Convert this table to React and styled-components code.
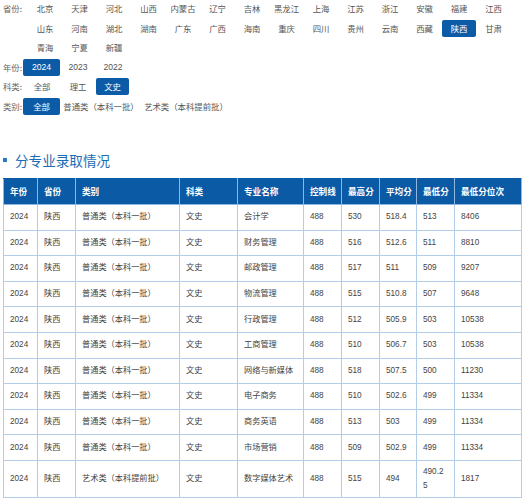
import React from "react";
import styled, { createGlobalStyle } from "styled-components";

const GlobalStyle = createGlobalStyle`
  body {
    margin: 0;
    background: #fff;
    font-family: "Liberation Sans", "Noto Sans CJK SC", sans-serif;
  }
`;

const provinces = [
  "北京", "天津", "河北", "山西", "内蒙古", "辽宁", "吉林", "黑龙江", "上海", "江苏", "浙江", "安徽", "福建", "江西",
  "山东", "河南", "湖北", "湖南", "广东", "广西", "海南", "重庆", "四川", "贵州", "云南", "西藏", "陕西", "甘肃",
  "青海", "宁夏", "新疆",
];

const years = [
  { text: "2024", w: 37, active: true },
  { text: "2023", w: 36 },
  { text: "2022", w: 34 },
];

const subjects = [
  { text: "全部", w: 38 },
  { text: "理工", w: 34 },
  { text: "文史", w: 33, active: true },
];

const kinds = [
  { text: "全部", w: 37, active: true },
  { text: "普通类（本科一批）", w: 82 },
  { text: "艺术类（本科提前批）", w: 88 },
];

const normal = ["普通类（本科一批）", "文史"];

const rows = [
  ["会计学", "488", "530", "518.4", "513", "8406"],
  ["财务管理", "488", "516", "512.6", "511", "8810"],
  ["邮政管理", "488", "517", "511", "509", "9207"],
  ["物流管理", "488", "515", "510.8", "507", "9648"],
  ["行政管理", "488", "512", "505.9", "503", "10538"],
  ["工商管理", "488", "510", "506.7", "503", "10538"],
  ["网络与新媒体", "488", "518", "507.5", "500", "11230"],
  ["电子商务", "488", "510", "502.6", "499", "11334"],
  ["商务英语", "488", "513", "503", "499", "11334"],
  ["市场营销", "488", "509", "502.9", "499", "11334"],
];

const headers = ["年份", "省份", "类别", "科类", "专业名称", "控制线", "最高分", "平均分", "最低分", "最低分位次"];
const colWidths = [34, 38, 104, 58, 66, 38, 38, 37, 38, 67];

const Filters = styled.div`
  display: flex;
  flex-direction: column;
  gap: 2.6px;
  font-family: "Noto Sans CJK SC", sans-serif;
  font-size: 8.4px;
  color: #555;
`;

const FilterRow = styled.div`
  display: flex;
  align-items: flex-start;
`;

const Label = styled.span`
  width: ${(p) => p.$w}px;
  flex-shrink: 0;
  height: 17px;
  line-height: 17px;
  padding-left: 3px;
  box-sizing: border-box;
  color: #666;
  white-space: nowrap;
`;

const ProvinceGrid = styled.div`
  display: grid;
  grid-template-columns: repeat(14, 34.5px);
  row-gap: 2.6px;
`;

const Item = styled.span`
  width: ${(p) => (p.$w ? `${p.$w}px` : "auto")};
  height: 17px;
  line-height: 17px;
  text-align: center;
  white-space: nowrap;
  border-radius: 2px;
  font-family: ${(p) => (p.$num ? '"Liberation Sans", sans-serif' : "inherit")};
  font-size: ${(p) => (p.$num ? "8.6px" : "inherit")};
  background: ${(p) => (p.$active ? "#0c5ba7" : "transparent")};
  color: ${(p) => (p.$active ? "#fff" : "#555")};
  margin-left: ${(p) => p.$ml || 0}px;
`;

const Heading = styled.h2`
  display: flex;
  align-items: center;
  margin: 35px 0 8px 3px;
  height: 20px;
  font-family: "Noto Sans CJK SC", sans-serif;
  font-size: 13.6px;
  font-weight: normal;
  color: #1c6db5;
`;

const Bullet = styled.span`
  width: 4px;
  height: 4px;
  background: #2a78bf;
  margin-right: 8px;
`;

const Table = styled.table`
  margin-left: 3px;
  width: 518px;
  table-layout: fixed;
  border-collapse: collapse;
  font-family: "Liberation Sans", "Noto Sans CJK SC", sans-serif;
`;

const Th = styled.th`
  background: #0b5aa6;
  color: #fff;
  font-family: "Noto Sans CJK SC", sans-serif;
  font-size: 8.6px;
  font-weight: bold;
  text-align: left;
  white-space: nowrap;
  overflow: hidden;
  height: 25px;
  padding: 0 0 0 6px;
  border: 1px solid #8fb6dd;
  border-top-color: #0b5aa6;
`;

const Td = styled.td`
  font-size: 8.2px;
  color: #444;
  height: ${(p) => (p.$tall ? 36 : 24.6)}px;
  padding: 0 8px 0 6px;
  line-height: 14px;
  border: 1px solid #b3cde6;
  word-break: break-all;
`;

export default function App() {
  const allRows = rows.map((r) => ["2024", "陕西", ...normal, ...r]);
  allRows.push(["2024", "陕西", "艺术类（本科提前批）", "文史", "数字媒体艺术", "488", "515", "494", "490.25", "1817"]);

  return (
    <>
      <GlobalStyle />
      <Filters>
        <FilterRow>
          <Label $w={27.75}>省份:</Label>
          <ProvinceGrid>
            {provinces.map((p) => (
              <Item key={p} $active={p === "陕西"}>
                {p}
              </Item>
            ))}
          </ProvinceGrid>
        </FilterRow>
        <FilterRow>
          <Label $w={23}>年份:</Label>
          {years.map((y) => (
            <Item key={y.text} $w={y.w} $active={y.active} $num>
              {y.text}
            </Item>
          ))}
        </FilterRow>
        <FilterRow>
          <Label $w={23}>科类:</Label>
          {subjects.map((s, i) => (
            <Item key={s.text} $w={s.w} $active={s.active} $ml={i === 2 ? 1 : 0}>
              {s.text}
            </Item>
          ))}
        </FilterRow>
        <FilterRow>
          <Label $w={23}>类别:</Label>
          {kinds.map((k) => (
            <Item key={k.text} $w={k.w} $active={k.active}>
              {k.text}
            </Item>
          ))}
        </FilterRow>
      </Filters>

      <Heading>
        <Bullet />
        分专业录取情况
      </Heading>

      <Table>
        <colgroup>
          {colWidths.map((w, i) => (
            <col key={i} style={{ width: w }} />
          ))}
        </colgroup>
        <thead>
          <tr>
            {headers.map((h) => (
              <Th key={h}>{h}</Th>
            ))}
          </tr>
        </thead>
        <tbody>
          {allRows.map((r, i) => (
            <tr key={i}>
              {r.map((c, j) => (
                <Td key={j} $tall={i === allRows.length - 1}>
                  {c}
                </Td>
              ))}
            </tr>
          ))}
        </tbody>
      </Table>
    </>
  );
}
